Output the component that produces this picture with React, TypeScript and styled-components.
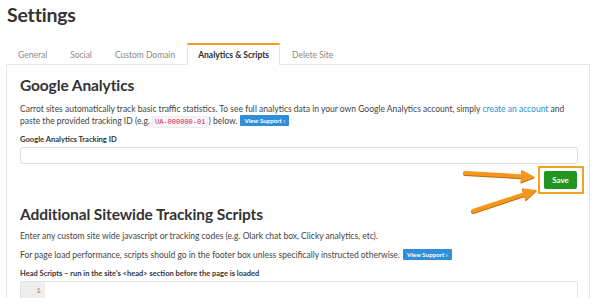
import styled, { createGlobalStyle } from "styled-components"

const Global = createGlobalStyle`
  html, body {
    margin: 0;
    padding: 0;
    background: #ffffff;
  }
  body {
    font-family: Lato, "Open Sans", sans-serif;
    color: #3d3d3d;
    overflow: hidden;
  }
`

const Page = styled.div`
  position: relative;
  width: 600px;
  height: 298px;
  padding: 0 10px 0 6px;
  box-sizing: border-box;
  overflow: hidden;
`

const Title = styled.h1`
  margin: 0;
  padding: 3px 0 0 1px;
  font-size: 19.5px;
  line-height: 24px;
  font-weight: 700;
  color: #333;
  letter-spacing: -0.2px;
`

const Tabs = styled.nav`
  display: flex;
  margin-top: 16px;
  height: 21px;
  padding-left: 1px;
`

const Tab = styled.div<{ $active?: boolean }>`
  box-sizing: border-box;
  padding: 0 10px;
  margin-right: 1px;
  display: flex;
  align-items: center;
  font-size: 8.5px;
  color: ${p => (p.$active ? "#2b2b2b" : "#8a8a8a")};
  font-weight: ${p => (p.$active ? 700 : 400)};
  background: #fff;
  border-top: 2px solid ${p => (p.$active ? "#f39a1f" : "transparent")};
  border-left: 1px solid ${p => (p.$active ? "#e4e4e4" : "transparent")};
  border-right: 1px solid ${p => (p.$active ? "#e4e4e4" : "transparent")};
  height: ${p => (p.$active ? "22px" : "21px")};
  position: relative;
  z-index: 1;
`

const Panel = styled.section`
  border: 1px solid #e6e6e6;
  border-bottom: none;
  padding: 10px 11px 0 13px;
  height: 260px;
  box-sizing: border-box;
`

const Heading = styled.h2<{ $top?: number }>`
  margin: ${p => p.$top ?? 0}px 0 0;
  font-size: 15.5px;
  line-height: 20px;
  font-weight: 700;
  color: #333;
  letter-spacing: -0.1px;
`

const Text = styled.p<{ $top?: number }>`
  margin: ${p => p.$top ?? 0}px 0 0;
  font-size: 8.5px;
  line-height: 12px;
  color: #444;
`

const Link = styled.a`
  color: #2b8fd6;
  text-decoration: none;
`

const Code = styled.code`
  font-family: "Liberation Mono", monospace;
  font-size: 7px;
  line-height: 1;
  color: #dd1144;
  background: #f7f7f9;
  border: 1px solid #ececec;
  border-radius: 2px;
  padding: 1px 2px;
`

const SupportButton = styled.span`
  display: inline-block;
  margin-left: 3px;
  padding: 0 4px;
  height: 11px;
  line-height: 11px;
  background: #2f8fd8;
  color: #fff;
  font-size: 6.2px;
  font-weight: 700;
  border-radius: 1px;
  vertical-align: top;
`

const Label = styled.div<{ $top?: number; $size?: number }>`
  margin-top: ${p => p.$top ?? 0}px;
  font-size: ${p => p.$size ?? 7.6}px;
  line-height: 10px;
  font-weight: 700;
  color: #333;
`

const Input = styled.div`
  margin-top: 3px;
  height: 17px;
  box-sizing: border-box;
  border: 1px solid #dcdcdc;
  border-radius: 3px;
  background: #fff;
`

const SaveRow = styled.div`
  display: flex;
  justify-content: flex-end;
  margin-top: 2px;
  margin-right: -6px;
`

const Highlight = styled.div`
  border: 2px solid #f4a020;
  padding: 3px 5px 3px 4px;
  background: #fff;
`

const SaveButton = styled.button`
  display: block;
  width: 33px;
  height: 18px;
  border: none;
  border-radius: 2px;
  background: #22961f;
  color: #fff;
  font-family: Lato, sans-serif;
  font-weight: 700;
  font-size: 8px;
  padding: 0;
`

const Editor = styled.div`
  margin-top: 2px;
  display: flex;
  height: 40px;
  border: 1px solid #e2e2e2;
  border-radius: 2px;
`

const Gutter = styled.div`
  width: 24px;
  background: #eeeeee;
  color: #888;
  font-family: "Liberation Mono", monospace;
  font-size: 8px;
  line-height: 10px;
  text-align: right;
  padding: 4px 4px 0 0;
  box-sizing: border-box;
`

const Arrows = styled.svg`
  position: absolute;
  left: 0;
  top: 0;
  pointer-events: none;
`

function Arrow({ x1, y1, x2, y2 }: { x1: number; y1: number; x2: number; y2: number }) {
  const a = Math.atan2(y2 - y1, x2 - x1)
  const len = 14
  const w = 6.5
  const bx = x2 - Math.cos(a) * len
  const by = y2 - Math.sin(a) * len
  const px = -Math.sin(a) * w
  const py = Math.cos(a) * w
  const head = `${x2},${y2} ${bx + px},${by + py} ${bx - px},${by - py}`
  return (
    <g>
      <line x1={x1} y1={y1 + 1} x2={bx} y2={by + 1} stroke="#b86a0c" strokeWidth={4} strokeLinecap="round" />
      <polygon points={head} fill="#b86a0c" transform="translate(0,1)" />
      <line x1={x1} y1={y1} x2={bx} y2={by} stroke="#f7961e" strokeWidth={4} strokeLinecap="round" />
      <polygon points={head} fill="#f7961e" />
    </g>
  )
}

export default function App() {
  return (
    <Page>
      <Global />
      <Title>Settings</Title>
      <Tabs>
        <Tab>General</Tab>
        <Tab>Social</Tab>
        <Tab>Custom Domain</Tab>
        <Tab $active>Analytics &amp; Scripts</Tab>
        <Tab>Delete Site</Tab>
      </Tabs>
      <Panel>
        <Heading>Google Analytics</Heading>
        <Text $top={8}>
          Carrot sites automatically track basic traffic statistics. To see full analytics data in your own Google
          Analytics account, simply <Link>create an account</Link> and paste the provided tracking ID (e.g.{" "}
          <Code>UA-000000-01</Code>) below.
          <SupportButton>View Support ›</SupportButton>
        </Text>
        <Label $top={7}>Google Analytics Tracking ID</Label>
        <Input />
        <SaveRow>
          <Highlight>
            <SaveButton>Save</SaveButton>
          </Highlight>
        </SaveRow>
        <Heading $top={10}>Additional Sitewide Tracking Scripts</Heading>
        <Text $top={6}>
          Enter any custom site wide javascript or tracking codes (e.g. Olark chat box, Clicky analytics, etc).
        </Text>
        <Text $top={7}>
          For page load performance, scripts should go in the footer box unless specifically instructed otherwise.
          <SupportButton>View Support ›</SupportButton>
        </Text>
        <Label $top={8} $size={7.5}>
          Head Scripts – run in the site's &lt;head&gt; section before the page is loaded
        </Label>
        <Editor>
          <Gutter>1</Gutter>
        </Editor>
      </Panel>
      <Arrows width={600} height={298}>
        <Arrow x1={465} y1={173} x2={535} y2={177} />
        <Arrow x1={473} y1={211} x2={537} y2={190} />
      </Arrows>
    </Page>
  )
}
